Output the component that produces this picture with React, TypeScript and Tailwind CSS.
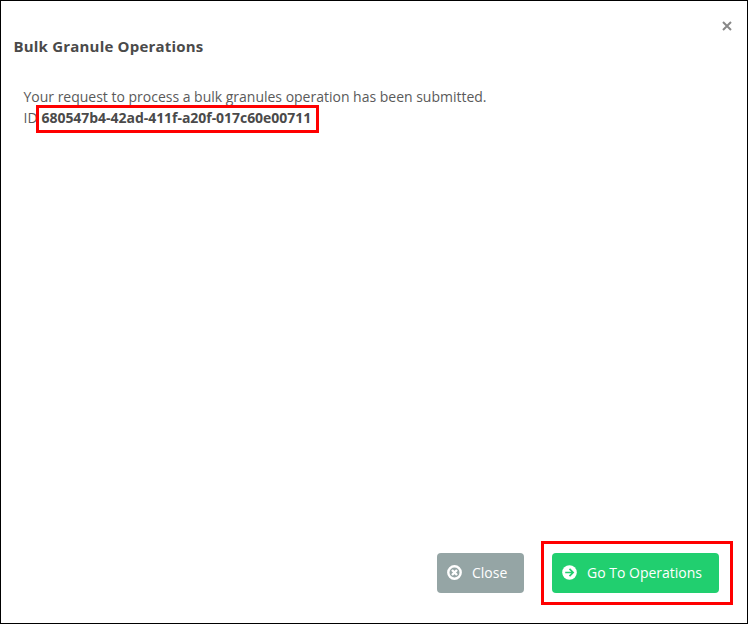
export default function App() {
  return (
    <div className="flex h-[624px] w-[748px] flex-col border border-black bg-white font-['Open_Sans',sans-serif] text-[#4a4a4a]">
      <header className="flex h-[72px] shrink-0 items-start justify-between pl-[12.5px] pr-[15px]">
        <h1 className="pt-[35px] text-[15px] font-bold leading-[20px] tracking-[0.2px]">Bulk Granule Operations</h1>
        <button aria-label="Dismiss" className="pt-[20px]">
          <svg width="10" height="10" viewBox="0 0 10 10" stroke="#888888" strokeWidth="2"><path d="M1 1L9 9M9 1L1 9" /></svg>
        </button>
      </header>
      <main className="flex-1 pl-[22.5px] pt-[13px] text-[14px] leading-[21px]">
        <p className="tracking-[-0.008px] text-[#5a5a5a]">Your request to process a bulk granules operation has been submitted.</p>
        <div className="flex">
          <span className="w-[12.5px] text-[#5a5a5a]">ID</span>
          <strong className="-mt-[2px] h-[28px] w-[283px] border-[3px] border-[#ff0000] pl-[2.5px] leading-[20px] tracking-[-0.04px]">680547b4-42ad-411f-a20f-017c60e00711</strong>
        </div>
      </main>
      <footer className="flex h-[82px] shrink-0 items-start justify-end pr-[14px]">
        <button className="mr-[17px] mt-[12px] flex h-[40px] w-[87px] items-center rounded-[4px] bg-[#95a5a5] pb-px pl-[9.5px] text-[14px] text-white">
          <svg width="15" height="15" viewBox="0 0 15 15" fill="none" stroke="currentColor" strokeWidth="2.4"><circle cx="7.5" cy="7.5" r="6.2" /><path d="M5 5L10 10M10 5L5 10" /></svg>
          <span className="ml-[10.5px]">Close</span>
        </button>
        <div className="h-[64px] w-[192px] border-[3px] border-[#ff0000] pl-[8px] pt-[9px]">
          <button className="flex h-[40px] w-[167px] items-center rounded-[4px] bg-[#21cf6f] pb-px pl-[10px] text-[14px] text-white">
            <svg width="15" height="15" viewBox="0 0 15 15" fill="none"><circle cx="7.5" cy="7.5" r="7.3" fill="white" /><path d="M3.2 7.5H11M7.5 3.9L11.1 7.5L7.5 11.1" stroke="#21cf6f" strokeWidth="1.7" /></svg>
            <span className="ml-[10px]">Go To Operations</span>
          </button>
        </div>
      </footer>
    </div>
  );
}
